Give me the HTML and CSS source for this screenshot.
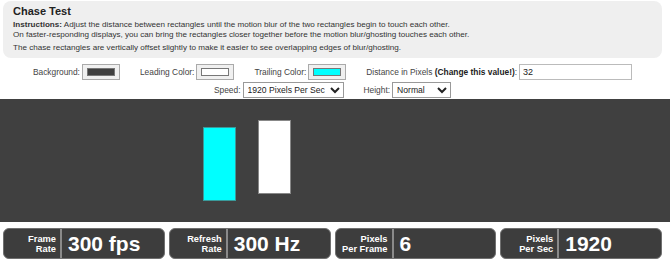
FILE: index.html
```html
<!DOCTYPE html>
<html>

<head>
    <title>Chase Test</title>
    <link rel="stylesheet" href="styles.css">
</head>

<body>
    <div class="top">
        <div class="info">
            <h1>Chase Test</h1>
            <p><b>Instructions:</b> Adjust the distance between rectangles until the motion blur of the two rectangles begin to touch each other.<br>
                On faster-responding displays, you can bring the rectangles closer together before the motion blur/ghosting touches each other.</p>
            <p>The chase rectangles are vertically offset slightly to make it easier to see overlapping edges of blur/ghosting.</p>
        </div>
        <div class="controls">
            <div class="row">
                <label><span>Background:</span> <span class="swatch"><span class="sw-bg"></span></span></label>
                <label><span>Leading Color:</span> <span class="swatch"><span class="sw-lead"></span></span></label>
                <label><span>Trailing Color:</span> <span class="swatch"><span class="sw-trail"></span></span></label>
                <label><span>Distance in Pixels <b>(Change this value!)</b>:</span> <input type="text" class="distance" value="32"></label>
            </div>
            <div class="row row2">
                <label><span>Speed:</span> <select class="speed">
                        <option>1920 Pixels Per Sec</option>
                        <option>960 Pixels Per Sec</option>
                    </select></label>
                <label><span>Height:</span> <select class="height">
                        <option>Normal</option>
                        <option>Tall</option>
                    </select></label>
            </div>
        </div>
    </div>

    <div class="stage">
        <div class="rect trailing"></div>
        <div class="rect leading"></div>
    </div>

    <div class="stats">
        <div class="stat">
            <div class="stat-label">Frame<br>Rate</div>
            <div class="stat-value">300 fps</div>
        </div>
        <div class="stat">
            <div class="stat-label">Refresh<br>Rate</div>
            <div class="stat-value">300 Hz</div>
        </div>
        <div class="stat">
            <div class="stat-label">Pixels<br>Per Frame</div>
            <div class="stat-value">6</div>
        </div>
        <div class="stat">
            <div class="stat-label">Pixels<br>Per Sec</div>
            <div class="stat-value">1920</div>
        </div>
    </div>
</body>

</html>
```

FILE: styles.css
```css
body {
    margin: 0;
    font-family: "Liberation Sans", Arial, sans-serif;
    background: #fff;
    color: #333;
}

.top {
    padding: 1px 8px 0 3px;
}

.info {
    height: 57px;
    box-sizing: border-box;
    background: #efefef;
    border-radius: 8px;
    padding: 4px 10px 0;
}

.info h1 {
    font-size: 11px;
    margin: 0 0 3px;
    color: #222;
}

.info p {
    font-size: 8.1px;
    line-height: 10px;
    margin: 0;
    color: #333;
}

.info p + p {
    margin-top: 3px;
}

.controls {
    height: 41px;
}

.row {
    display: flex;
    justify-content: center;
    align-items: center;
    gap: 20px;
    height: 17px;
    padding-top: 5px;
    font-size: 8.4px;
    color: #444;
}

.row2 {
    padding-top: 2px;
    height: 16px;
}

.row label {
    display: flex;
    align-items: center;
    gap: 2px;
}

.row b {
    color: #222;
}

.swatch {
    display: inline-block;
    width: 38px;
    height: 16px;
    box-sizing: border-box;
    border: 1px solid #aaa;
    background: #f0f0f0;
    padding: 3px 4px;
}

.swatch span {
    display: block;
    height: 100%;
    border: 1px solid #777;
    box-sizing: border-box;
}

.sw-bg {
    background: #404040;
}

.sw-lead {
    background: #fff;
}

.sw-trail {
    background: #00ffff;
}

input.distance {
    width: 113px;
    height: 16px;
    box-sizing: border-box;
    border: 1px solid #bbb;
    padding: 0 3px;
    font-family: "Liberation Sans", Arial, sans-serif;
    font-size: 9px;
    color: #222;
}

select {
    height: 16px;
    box-sizing: border-box;
    border: 1px solid #999;
    border-radius: 0;
    padding: 0;
    font-family: "Liberation Sans", Arial, sans-serif;
    font-size: 8.6px;
    color: #222;
    background: #fff;
}

select.speed {
    width: 101px;
}

select.height {
    width: 59px;
}

.stage {
    position: relative;
    height: 123px;
    background: #404040;
}

.rect {
    position: absolute;
    width: 33px;
    height: 74px;
    box-sizing: border-box;
    border: 1px solid #888;
}

.trailing {
    left: 203px;
    top: 28px;
    background: #00ffff;
    border-color: #3a9a9a;
}

.leading {
    left: 258px;
    top: 21px;
    background: #fff;
}

.stats {
    display: grid;
    grid-template-columns: repeat(4, 1fr);
    gap: 4px;
    margin: 6px 8px 0 3px;
}

.stat {
    display: flex;
    height: 31px;
    box-sizing: border-box;
    background: #3d3d3d;
    border: 1px solid #707070;
    border-radius: 6px;
    color: #fff;
    overflow: hidden;
}

.stat-label {
    width: 58px;
    box-sizing: border-box;
    display: flex;
    flex-direction: column;
    justify-content: center;
    text-align: right;
    padding-right: 4px;
    border-right: 2px solid #8a8a8a;
    font-size: 9.3px;
    font-weight: bold;
    line-height: 10px;
}

.stat-value {
    display: flex;
    align-items: center;
    padding-left: 6px;
    font-size: 21px;
    font-weight: bold;
}
```
